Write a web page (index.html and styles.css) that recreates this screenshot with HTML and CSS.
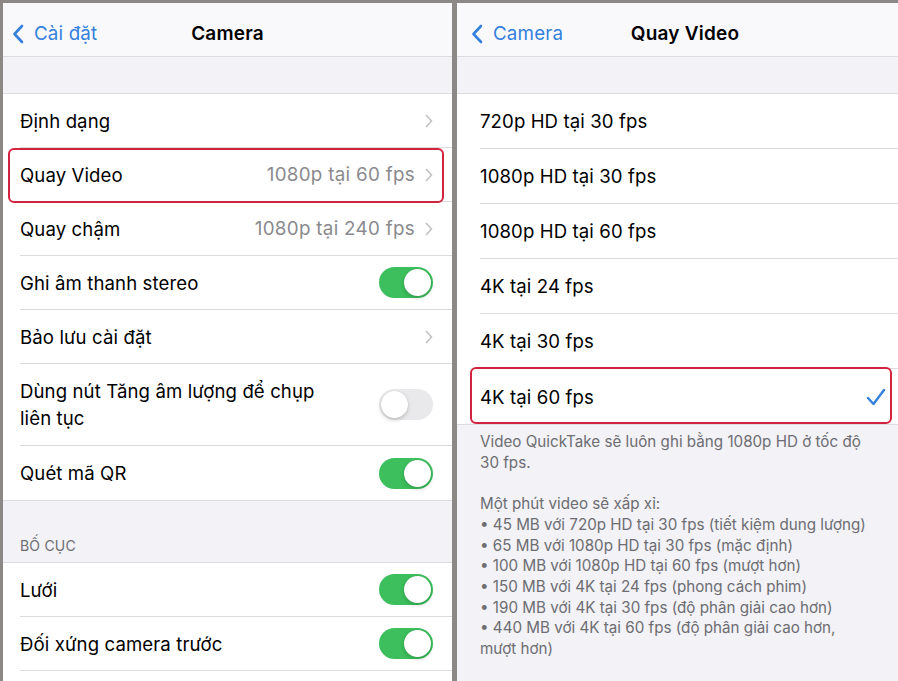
FILE: index.html
```html
<!DOCTYPE html>
<html lang="vi">
<head>
<meta charset="utf-8">
<title>Camera – Quay Video</title>
<link rel="stylesheet" href="styles.css">
</head>
<body>
<div class="frame">
  <!-- Camera settings screen -->
  <section class="screen screen-left">
    <header class="nav">
      <div class="back">
        <svg class="back-chev" viewBox="0 0 12 20" width="12" height="20"><path d="M10 2 L2.5 10 L10 18" fill="none" stroke="currentColor" stroke-width="2.6" stroke-linecap="round" stroke-linejoin="round"/></svg>
        <span>Cài đặt</span>
      </div>
      <h1 class="title">Camera</h1>
    </header>

    <div class="spacer"></div>

    <div class="group">
      <div class="row"><div class="row-inner">
        <span class="label">Định dạng</span>
        <span class="accessory"><svg class="chev" viewBox="0 0 8 14" width="8" height="14"><path d="M1.5 1.5 L6.5 7 L1.5 12.5" fill="none" stroke="currentColor" stroke-width="1.7" stroke-linecap="round" stroke-linejoin="round"/></svg></span>
      </div></div>
      <div class="row highlighted"><div class="row-inner">
        <span class="label">Quay Video</span>
        <span class="accessory"><span class="value">1080p tại 60 fps</span><svg class="chev" viewBox="0 0 8 14" width="8" height="14"><path d="M1.5 1.5 L6.5 7 L1.5 12.5" fill="none" stroke="currentColor" stroke-width="1.7" stroke-linecap="round" stroke-linejoin="round"/></svg></span>
      </div></div>
      <div class="row"><div class="row-inner">
        <span class="label">Quay chậm</span>
        <span class="accessory"><span class="value">1080p tại 240 fps</span><svg class="chev" viewBox="0 0 8 14" width="8" height="14"><path d="M1.5 1.5 L6.5 7 L1.5 12.5" fill="none" stroke="currentColor" stroke-width="1.7" stroke-linecap="round" stroke-linejoin="round"/></svg></span>
      </div></div>
      <div class="row"><div class="row-inner">
        <span class="label">Ghi âm thanh stereo</span>
        <span class="toggle on"><span class="knob"></span></span>
      </div></div>
      <div class="row"><div class="row-inner">
        <span class="label">Bảo lưu cài đặt</span>
        <span class="accessory"><svg class="chev" viewBox="0 0 8 14" width="8" height="14"><path d="M1.5 1.5 L6.5 7 L1.5 12.5" fill="none" stroke="currentColor" stroke-width="1.7" stroke-linecap="round" stroke-linejoin="round"/></svg></span>
      </div></div>
      <div class="row tall"><div class="row-inner">
        <span class="label wrap">Dùng nút Tăng âm lượng để chụp liên tục</span>
        <span class="toggle"><span class="knob"></span></span>
      </div></div>
      <div class="row"><div class="row-inner">
        <span class="label">Quét mã QR</span>
        <span class="toggle on"><span class="knob"></span></span>
      </div></div>
    </div>

    <div class="section-head">BỐ CỤC</div>

    <div class="group">
      <div class="row"><div class="row-inner">
        <span class="label">Lưới</span>
        <span class="toggle on"><span class="knob"></span></span>
      </div></div>
      <div class="row"><div class="row-inner">
        <span class="label">Đối xứng camera trước</span>
        <span class="toggle on"><span class="knob"></span></span>
      </div></div>
      <div class="row"><div class="row-inner"></div></div>
    </div>
  </section>

  <!-- Video recording format screen -->
  <section class="screen screen-right">
    <header class="nav">
      <div class="back back-right">
        <svg class="back-chev" viewBox="0 0 12 20" width="12" height="20"><path d="M10 2 L2.5 10 L10 18" fill="none" stroke="currentColor" stroke-width="2.6" stroke-linecap="round" stroke-linejoin="round"/></svg>
        <span>Camera</span>
      </div>
      <h1 class="title">Quay Video</h1>
    </header>

    <div class="spacer"></div>

    <div class="group">
      <div class="row opt"><div class="row-inner"><span class="label">720p HD tại 30 fps</span></div></div>
      <div class="row opt"><div class="row-inner"><span class="label">1080p HD tại 30 fps</span></div></div>
      <div class="row opt"><div class="row-inner"><span class="label">1080p HD tại 60 fps</span></div></div>
      <div class="row opt"><div class="row-inner"><span class="label">4K tại 24 fps</span></div></div>
      <div class="row opt"><div class="row-inner"><span class="label">4K tại 30 fps</span></div></div>
      <div class="row opt highlighted"><div class="row-inner">
        <span class="label">4K tại 60 fps</span>
        <svg class="check" viewBox="0 0 20 18" width="20" height="18"><path d="M2 10 L7.5 16 L18 2" fill="none" stroke="currentColor" stroke-width="2.4" stroke-linecap="round" stroke-linejoin="round"/></svg>
      </div></div>
    </div>

    <div class="footnote">
      <p>Video QuickTake sẽ luôn ghi bằng 1080p HD ở tốc độ 30 fps.</p>
      <p>Một phút video sẽ xấp xỉ:<br>
      • 45 MB với 720p HD tại 30 fps (tiết kiệm dung lượng)<br>
      • 65 MB với 1080p HD tại 30 fps (mặc định)<br>
      • 100 MB với 1080p HD tại 60 fps (mượt hơn)<br>
      • 150 MB với 4K tại 24 fps (phong cách phim)<br>
      • 190 MB với 4K tại 30 fps (độ phân giải cao hơn)<br>
      • 440 MB với 4K tại 60 fps (độ phân giải cao hơn, mượt hơn)</p>
    </div>
  </section>
</div>
</body>
</html>
```

FILE: styles.css
```css
* { box-sizing: border-box; }

html, body {
  margin: 0;
  height: 100%;
  overflow: hidden;
  background: #8b8885;
}

body {
  font-family: Inter, "Noto Sans", "Liberation Sans", sans-serif;
  color: #000;
  -webkit-font-smoothing: antialiased;
}

.frame {
  display: flex;
  gap: 5px;
  padding: 3px 0 0 3px;
  height: 100%;
  width: 920px;
}

.screen {
  background: #f2f2f7;
  height: 100%;
  overflow: hidden;
  flex: none;
  display: flex;
  flex-direction: column;
}

.screen-left { width: 449px; }
.screen-right { width: 456px; }

/* navigation bar */
.nav {
  position: relative;
  height: 54px;
  flex: none;
  padding-top: 8px;
  background: #f9f9fb;
  border-bottom: 1px solid #dcdce0;
  display: flex;
  align-items: center;
}

.back {
  display: flex;
  align-items: center;
  gap: 10px;
  padding-left: 9px;
  color: #3480dd;
  font-size: 18.8px;
  letter-spacing: 0.15px;
}

.back-right { padding-left: 14px; }

.back-chev { display: block; }

.title {
  position: absolute;
  left: 0;
  right: 0;
  top: 8px;
  bottom: 0;
  margin: 0;
  display: flex;
  align-items: center;
  justify-content: center;
  font-size: 19px;
  font-weight: 600;
  letter-spacing: 0.2px;
  pointer-events: none;
}

.spacer { height: 36px; flex: none; }

/* grouped list */
.group {
  background: #fff;
  border-top: 1px solid #dcdce0;
  border-bottom: 1px solid #dcdce0;
  flex: none;
}

.row {
  position: relative;
  height: 54px;
  padding-left: 17px;
  display: flex;
}

.row.tall { height: 82px; }
.row.opt { height: 55px; padding-left: 23px; }

.row-inner {
  flex: 1;
  display: flex;
  align-items: center;
  justify-content: space-between;
  border-bottom: 1px solid #dcdce0;
  padding-right: 19px;
  gap: 12px;
}

.row:last-child .row-inner { border-bottom: none; }

.label {
  font-size: 18.6px;
  letter-spacing: 0.1px;
  white-space: nowrap;
}

.label.wrap {
  white-space: normal;
  line-height: 27px;
  max-width: 320px;
}

.accessory {
  display: flex;
  align-items: center;
  gap: 10px;
  color: #c4c4c7;
}

.value {
  color: #8a8a8e;
  font-size: 18.8px;
  letter-spacing: 0.3px;
}

.chev { display: block; }

/* switches */
.toggle {
  position: relative;
  width: 54px;
  height: 31px;
  border-radius: 16px;
  background: #e9e9eb;
  flex: none;
}

.toggle .knob {
  position: absolute;
  top: 2px;
  left: 2px;
  width: 27px;
  height: 27px;
  border-radius: 50%;
  background: #fff;
  box-shadow: 0 2px 4px rgba(0,0,0,0.18), 0 0 1px rgba(0,0,0,0.12);
}

.toggle.on { background: #3cbf5c; }
.toggle.on .knob { left: 25px; }

/* red outline marking a row */
.highlighted::after {
  content: "";
  position: absolute;
  left: 5px;
  right: 8px;
  top: 0;
  bottom: -1px;
  border: 2px solid #d3243f;
  border-radius: 6px;
  pointer-events: none;
}

.row.opt.highlighted::after {
  left: 13px;
  right: 21px;
  top: -2px;
  bottom: 0;
}

.check {
  display: block;
  color: #3480dd;
  margin-right: 8px;
}

/* section header and footers */
.section-head {
  height: 61px;
  flex: none;
  padding: 0 0 8px 17px;
  display: flex;
  align-items: flex-end;
  font-size: 14px;
  color: #6d6d72;
  letter-spacing: 0.2px;
}

.footnote {
  padding: 7px 45px 0 23px;
  font-size: 15.2px;
  line-height: 20.7px;
  color: #6d6d72;
}

.footnote p { margin: 0 0 20.7px; }
```
